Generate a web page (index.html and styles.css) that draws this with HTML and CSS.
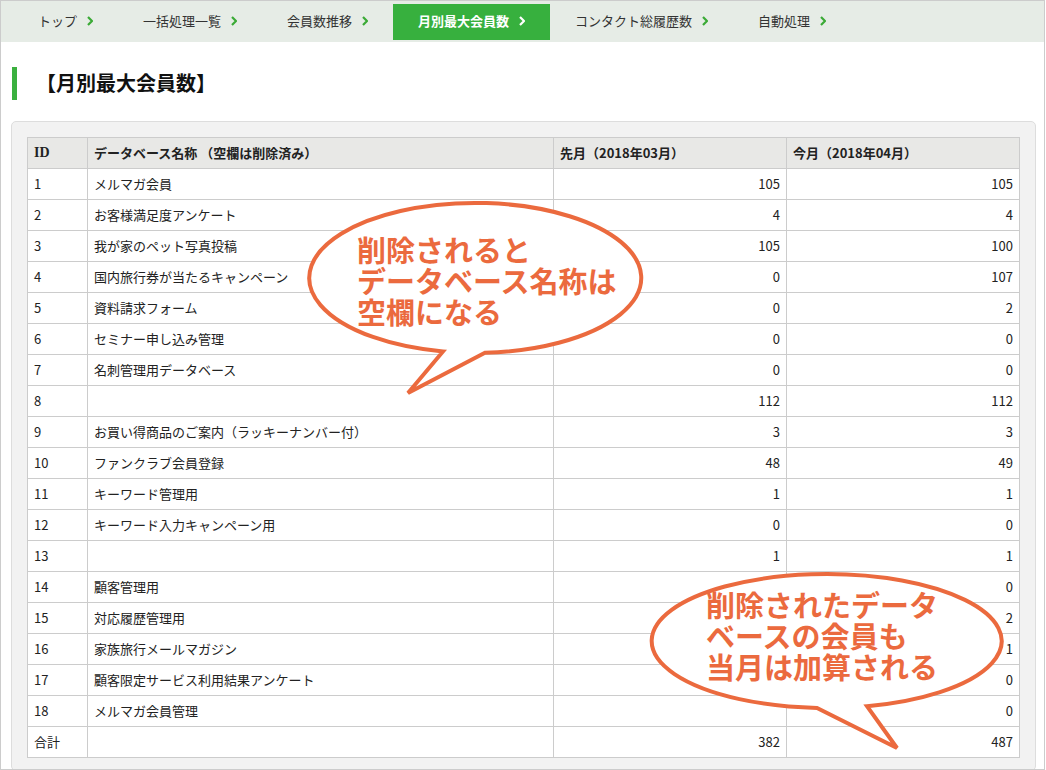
FILE: index.html
```html
<!DOCTYPE html>
<html lang="ja">
<head>
    <meta charset="UTF-8">
    <meta name="viewport" content="width=device-width, initial-scale=1.0">
    <title>月別最大会員数</title>
    <link rel="stylesheet" href="styles.css">
</head>
<body>
    <div class="frame">
        <nav class="nav">
            <a class="nav-item" href="#">トップ<svg class="chev" viewBox="0 0 6 10"><polyline points="1,1 5,5 1,9"/></svg></a>
            <a class="nav-item" href="#">一括処理一覧<svg class="chev" viewBox="0 0 6 10"><polyline points="1,1 5,5 1,9"/></svg></a>
            <a class="nav-item" href="#">会員数推移<svg class="chev" viewBox="0 0 6 10"><polyline points="1,1 5,5 1,9"/></svg></a>
            <a class="nav-item active" href="#">月別最大会員数<svg class="chev" viewBox="0 0 6 10"><polyline points="1,1 5,5 1,9"/></svg></a>
            <a class="nav-item" href="#">コンタクト総履歴数<svg class="chev" viewBox="0 0 6 10"><polyline points="1,1 5,5 1,9"/></svg></a>
            <a class="nav-item" href="#">自動処理<svg class="chev" viewBox="0 0 6 10"><polyline points="1,1 5,5 1,9"/></svg></a>
        </nav>

        <h1 class="page-title">【月別最大会員数】</h1>

        <div class="panel">
            <table class="data-table">
                <colgroup>
                    <col class="col-id">
                    <col class="col-name">
                    <col class="col-month">
                    <col>
                </colgroup>
                <thead>
                    <tr>
                        <th class="th-id">ID</th>
                        <th>データベース名称 （空欄は削除済み）</th>
                        <th>先月（2018年03月）</th>
                        <th>今月（2018年04月）</th>
                    </tr>
                </thead>
                <tbody>
                    <tr><td>1</td><td>メルマガ会員</td><td class="num">105</td><td class="num">105</td></tr>
                    <tr><td>2</td><td>お客様満足度アンケート</td><td class="num">4</td><td class="num">4</td></tr>
                    <tr><td>3</td><td>我が家のペット写真投稿</td><td class="num">105</td><td class="num">100</td></tr>
                    <tr><td>4</td><td>国内旅行券が当たるキャンペーン</td><td class="num">0</td><td class="num">107</td></tr>
                    <tr><td>5</td><td>資料請求フォーム</td><td class="num">0</td><td class="num">2</td></tr>
                    <tr><td>6</td><td>セミナー申し込み管理</td><td class="num">0</td><td class="num">0</td></tr>
                    <tr><td>7</td><td>名刺管理用データベース</td><td class="num">0</td><td class="num">0</td></tr>
                    <tr><td>8</td><td></td><td class="num">112</td><td class="num">112</td></tr>
                    <tr><td>9</td><td>お買い得商品のご案内（ラッキーナンバー付）</td><td class="num">3</td><td class="num">3</td></tr>
                    <tr><td>10</td><td>ファンクラブ会員登録</td><td class="num">48</td><td class="num">49</td></tr>
                    <tr><td>11</td><td>キーワード管理用</td><td class="num">1</td><td class="num">1</td></tr>
                    <tr><td>12</td><td>キーワード入力キャンペーン用</td><td class="num">0</td><td class="num">0</td></tr>
                    <tr><td>13</td><td></td><td class="num">1</td><td class="num">1</td></tr>
                    <tr><td>14</td><td>顧客管理用</td><td class="num"></td><td class="num">0</td></tr>
                    <tr><td>15</td><td>対応履歴管理用</td><td class="num"></td><td class="num">2</td></tr>
                    <tr><td>16</td><td>家族旅行メールマガジン</td><td class="num"></td><td class="num">1</td></tr>
                    <tr><td>17</td><td>顧客限定サービス利用結果アンケート</td><td class="num"></td><td class="num">0</td></tr>
                    <tr><td>18</td><td>メルマガ会員管理</td><td class="num"></td><td class="num">0</td></tr>
                    <tr><td>合計</td><td></td><td class="num">382</td><td class="num">487</td></tr>
                </tbody>
            </table>
        </div>
    </div>

    <!-- callouts drawn over the table -->
    <svg class="bubbles" width="1046" height="770" viewBox="0 0 1046 770">
        <path d="M 443 351.5 A 166 75 0 1 1 485 352.8 L 408 393 Z"/>
        <path d="M 817 707.9 A 175 67 0 1 1 867 706.2 L 897 748 Z"/>
    </svg>
    <div class="note note-1">削除されると<br>データベース名称は<br>空欄になる</div>
    <div class="note note-2">削除されたデータ<br>ベースの会員も<br>当月は加算される</div>
</body>
</html>
```

FILE: styles.css
```css
body {
    margin: 0;
    font-family: "Noto Sans CJK JP", "Noto Sans", sans-serif;
    font-size: 13px;
    color: #222;
    background-color: #fff;
}
.frame {
    width: 1043px;
    height: 768px;
    border: 1px solid #ccc;
    overflow: hidden;
}

/* top navigation */
.nav {
    display: flex;
    align-items: center;
    height: 41px;
    padding-left: 12px;
    background-color: #e6ece6;
}
.nav-item {
    display: flex;
    align-items: center;
    gap: 10px;
    height: 34px;
    padding: 0 25px 2px;
    color: #333;
    text-decoration: none;
    line-height: 34px;
}
.nav-item .chev {
    width: 6px;
    height: 10px;
    fill: none;
    stroke: #3aaa35;
    stroke-width: 2.2;
}
.nav-item.active {
    background-color: #37b03e;
    color: #fff;
    font-weight: bold;
}
.nav-item.active .chev {
    stroke: #fff;
}

.page-title {
    margin: 25px 0 0 11px;
    height: 33px;
    padding-left: 19px;
    border-left: 5px solid #3bb03f;
    font-size: 20px;
    font-weight: bold;
    line-height: 32px;
    color: #111;
}

/* table panel */
.panel {
    margin: 21px 8px 0 10px;
    padding: 15px 15px 12px;
    background-color: #f2f2f2;
    border: 1px solid #ddd;
    border-radius: 5px;
}
.data-table {
    width: 100%;
    border-collapse: collapse;
    table-layout: fixed;
    background-color: #fff;
}
.col-id {
    width: 60px;
}
.col-name {
    width: 466px;
}
.col-month {
    width: 233px;
}
.data-table th,
.data-table td {
    height: 29px;
    padding: 0 6px 1px;
    border: 1px solid #ccc;
    line-height: 29px;
    text-align: left;
    white-space: nowrap;
}
.data-table th {
    background-color: #e8e8e6;
    font-weight: bold;
    color: #222;
}
.data-table .th-id {
    font-family: "Liberation Serif", serif;
    font-size: 14px;
}
.data-table .num {
    text-align: right;
}

/* speech bubbles */
.bubbles {
    position: absolute;
    top: 0;
    left: 0;
}
.bubbles path {
    fill: #fff;
    stroke: #eb6a3e;
    stroke-width: 4;
    stroke-linejoin: miter;
}
.note {
    position: absolute;
    font-size: 29px;
    font-weight: bold;
    line-height: 31px;
    color: #eb6a3e;
    white-space: nowrap;
}
.note-1 {
    left: 357px;
    top: 234px;
}
.note-2 {
    left: 706px;
    top: 589px;
}
```
